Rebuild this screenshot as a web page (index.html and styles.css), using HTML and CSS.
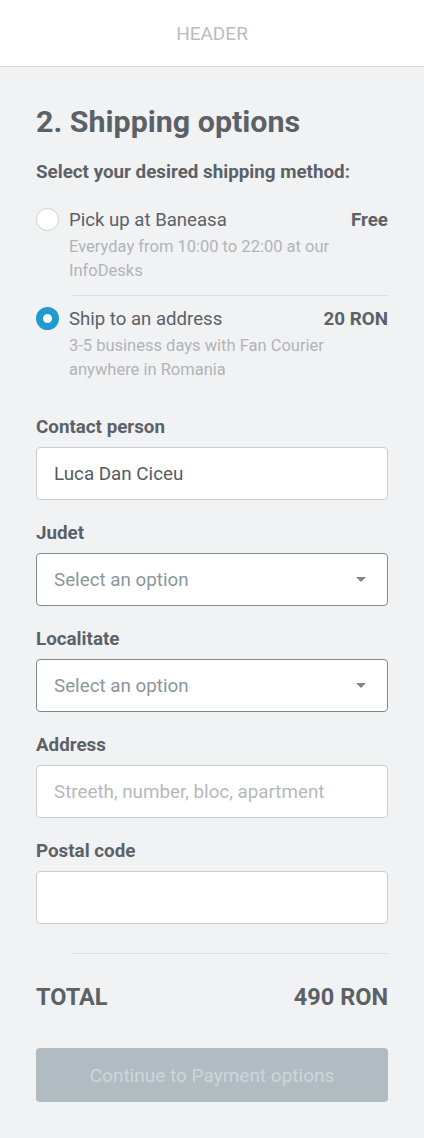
FILE: index.html
```html
<!DOCTYPE html>
<html lang="en">
<head>
    <meta charset="UTF-8">
    <meta name="viewport" content="width=device-width, initial-scale=1.0">
    <title>Checkout - Shipping</title>
    <link rel="stylesheet" href="styles.css">
</head>
<body>
    <div class="header">HEADER</div>

    <div class="page">
        <h1 class="title">2. Shipping options</h1>
        <p class="subtitle">Select your desired shipping method:</p>

        <div class="options">
            <label class="option">
                <span class="radio"></span>
                <span class="option-body">
                    <span class="option-top">
                        <span class="option-name">Pick up at Baneasa</span>
                        <span class="option-price">Free</span>
                    </span>
                    <span class="option-desc">Everyday from 10:00 to 22:00 at our InfoDesks</span>
                </span>
            </label>
            <div class="option-divider"></div>
            <label class="option">
                <span class="radio checked"></span>
                <span class="option-body">
                    <span class="option-top">
                        <span class="option-name">Ship to an address</span>
                        <span class="option-price">20 RON</span>
                    </span>
                    <span class="option-desc">3-5 business days with Fan Courier anywhere in Romania</span>
                </span>
            </label>
        </div>

        <div class="field">
            <div class="field-label">Contact person</div>
            <div class="input">Luca Dan Ciceu</div>
        </div>
        <div class="field">
            <div class="field-label">Judet</div>
            <div class="input select">
                <span class="placeholder-dark">Select an option</span>
                <span class="caret"></span>
            </div>
        </div>
        <div class="field">
            <div class="field-label">Localitate</div>
            <div class="input select">
                <span class="placeholder-dark">Select an option</span>
                <span class="caret"></span>
            </div>
        </div>
        <div class="field">
            <div class="field-label">Address</div>
            <div class="input"><span class="placeholder">Streeth, number, bloc, apartment</span></div>
        </div>
        <div class="field">
            <div class="field-label">Postal code</div>
            <div class="input"></div>
        </div>

        <div class="total-divider"></div>
        <div class="total">
            <span>TOTAL</span>
            <span>490 RON</span>
        </div>

        <button class="continue" disabled>Continue to Payment options</button>
    </div>
</body>
</html>
```

FILE: styles.css
```css
* {
    box-sizing: border-box;
    margin: 0;
    padding: 0;
}
body {
    font-family: Roboto, "Liberation Sans", sans-serif;
    background: #f1f2f4;
    color: #5b6166;
    min-height: 1138px;
}
.header {
    height: 67px;
    background: #ffffff;
    border-bottom: 1px solid #d9dbde;
    display: flex;
    align-items: center;
    justify-content: center;
    color: #b9bdc3;
    font-size: 19px;
}
.page {
    padding: 37px 36px 36px 36px;
}
.title {
    font-size: 30.4px;
    font-weight: bold;
    line-height: 36px;
    color: #5b6166;
}
.subtitle {
    margin-top: 20px;
    font-size: 18.8px;
    font-weight: bold;
    line-height: 24px;
}
.options {
    margin-top: 24px;
}
.option {
    display: flex;
    gap: 10px;
}
.radio {
    flex: none;
    width: 23px;
    height: 23px;
    border-radius: 50%;
    border: 1.5px solid #cdd0d4;
    background: #ffffff;
}
.radio.checked {
    border: 7.5px solid #1f9bd1;
}
.option-body {
    flex: 1;
    display: flex;
    flex-direction: column;
}
.option-top {
    display: flex;
    justify-content: space-between;
    line-height: 24px;
}
.option-name {
    font-size: 18.6px;
    color: #5b6166;
}
.option-price {
    font-size: 18.8px;
    font-weight: bold;
}
.option-desc {
    font-size: 16.5px;
    line-height: 24px;
    color: #b0b4b8;
    margin-top: 3px;
    padding-right: 40px;
}
.option-divider {
    height: 1px;
    background: #dcdee1;
    margin: 12px 0 11px 37px;
}
.field {
    margin-top: 33px;
}
.field + .field {
    margin-top: 21px;
}
.field-label {
    font-size: 18.8px;
    font-weight: bold;
    line-height: 24px;
    margin-bottom: 8px;
}
.input {
    height: 53px;
    background: #ffffff;
    border: 1px solid #c9ccd0;
    border-radius: 4px;
    display: flex;
    align-items: center;
    padding: 0 17px;
    font-size: 18.8px;
    color: #555b60;
}
.input.select {
    border-color: #7e8a91;
    justify-content: space-between;
    padding-right: 21px;
}
.placeholder-dark {
    color: #8a969d;
}
.placeholder {
    color: #b5b9bd;
}
.caret {
    width: 0;
    height: 0;
    border-left: 5px solid transparent;
    border-right: 5px solid transparent;
    border-top: 5px solid #7b8790;
}
.total-divider {
    height: 1px;
    background: #dcdee1;
    margin: 29px 0 0 37px;
}
.total {
    display: flex;
    justify-content: space-between;
    margin-top: 29px;
    font-size: 23.5px;
    font-weight: bold;
    line-height: 28px;
}
.continue {
    display: block;
    width: 100%;
    height: 54px;
    margin-top: 37px;
    background: #b1bcc2;
    border: none;
    border-radius: 4px;
    color: #ced5d9;
    font-family: Roboto, "Liberation Sans", sans-serif;
    font-size: 19px;
}
```
